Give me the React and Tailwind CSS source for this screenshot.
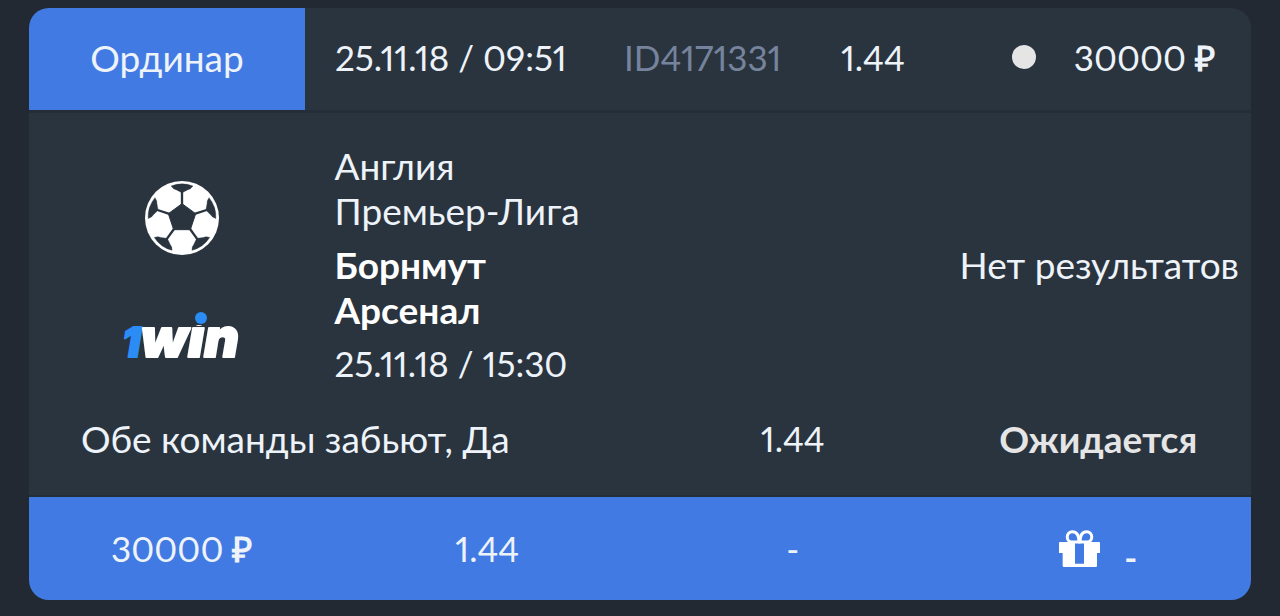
import React from "react";

const bet = {
    type: "Ординар",
    createdAt: "25.11.18 / 09:51",
    id: "ID4171331",
    odds: "1.44",
    amount: "30000",
    country: "Англия",
    league: "Премьер-Лига",
    home: "Борнмут",
    away: "Арсенал",
    startsAt: "25.11.18 / 15:30",
    result: "Нет результатов",
    outcome: "Обе команды забьют, Да",
    status: "Ожидается",
};

function Amount({ value }) {
    return (
        <span className="whitespace-nowrap">
            {value} <span className="font-bold">₽</span>
        </span>
    );
}

function BallIcon() {
    const angles = [0, 72, 144, 216, 288];

    return (
        <svg viewBox="-111 -111 222 222" className="w-[74px] h-[74px]" aria-hidden="true">
            <circle r="111" fill="#fff" />
            <g fill="#2a343f" stroke="#2a343f">
                <path d="M0 -43 L41 -13 L25 35 L-25 35 L-41 -13 Z" strokeWidth="3" strokeLinejoin="round" />
                {angles.map((a) => (
                    <g key={a} transform={`rotate(${a})`}>
                        <path d="M0 -40 V-80" strokeWidth="7" />
                        <path
                            d="M-33 -96 Q0 -109 33 -96 Q26 -86 18 -85 L3 -77 H-3 L-18 -85 Q-26 -86 -33 -96 Z"
                            strokeWidth="1"
                        />
                    </g>
                ))}
            </g>
        </svg>
    );
}

function Logo() {
    return (
        <svg viewBox="0 0 124 76" className="w-[124px] h-[76px]" role="img" aria-label="1win">
            <text
                x="2"
                y="60"
                fontFamily="Inter, sans-serif"
                fontWeight="900"
                fontStyle="italic"
                strokeWidth="2"
                strokeLinejoin="round"
            >
                <tspan fontSize="41" fill="#2a8cf4" stroke="#2a8cf4">1</tspan>
                <tspan fontSize="54" fill="#fff" stroke="#fff">win</tspan>
            </text>
            {/* round blue dot over the i */}
            <rect x="66" y="8" width="32" height="20" fill="#2a343f" />
            <circle cx="81" cy="21" r="6" fill="#2a8cf4" />
        </svg>
    );
}

function GiftIcon() {
    return (
        <svg viewBox="0 0 123 111" className="w-[41px] h-[37px]" aria-hidden="true">
            <g fill="none" stroke="#fff" strokeWidth="9">
                <path d="M60 36 H38 C19 34 21 5 40 5 C53 5 60 16 60 36 Z" />
                <path d="M63 36 H85 C104 34 102 5 83 5 C70 5 63 16 63 36 Z" />
            </g>
            <path
                fill="#fff"
                fillRule="evenodd"
                d="M3 36 H120 Q123 36 123 39 V69 H114 V107 Q114 111 110 111 H15 Q11 111 11 107 V69 H0 V39 Q0 36 3 36 Z M48 38 V101 H75 V38 Z"
            />
        </svg>
    );
}

export default function App() {
    return (
        <div className="min-h-screen bg-[#222932] px-[29px] py-2 font-[Lato,sans-serif] text-[37px] leading-[45px] text-[#edf3f9] proportional-nums">
            <article className="overflow-hidden rounded-[20px] bg-[#2a343f]">

                {/* Header */}
                <header className="grid grid-cols-[minmax(0,276fr)_minmax(0,289fr)_minmax(0,217fr)_minmax(0,171fr)_minmax(0,269fr)] items-center border-b-3 border-[#252d38] text-[35px] leading-[45px]">
                    <div className="flex h-[102px] items-center justify-center bg-[#427ae3] pb-1 text-[37px]">
                        {bet.type}
                    </div>
                    <time className="pb-1 pl-[30px] whitespace-nowrap">{bet.createdAt}</time>
                    <span className="pb-1 pl-[30px] text-[#76839c]">{bet.id}</span>
                    <span className="pb-1 pl-[30px]">{bet.odds}</span>
                    <div className="flex items-center justify-between pb-1 pl-[30px] pr-9">
                        <span className="size-6 rounded-full bg-[#e5e5e5]" />
                        <Amount value={bet.amount} />
                    </div>
                </header>

                {/* Match */}
                <section className="grid grid-cols-4 pt-[30px]">
                    <div className="flex flex-col items-center gap-[42px] pt-[38px]">
                        <BallIcon />
                        <Logo />
                    </div>
                    <div className="flex flex-col gap-[9px] whitespace-nowrap">
                        <div>
                            <p>{bet.country}</p>
                            <p>{bet.league}</p>
                        </div>
                        <div className="font-bold text-white">
                            <p>{bet.home}</p>
                            <p>{bet.away}</p>
                        </div>
                        <time className="text-[35px]">{bet.startsAt}</time>
                    </div>
                    <p className="col-span-2 self-center pr-3 text-right">{bet.result}</p>
                </section>

                {/* Outcome */}
                <section className="grid grid-cols-4 pt-[30px] pb-[34px] text-center">
                    <p className="col-span-2 pl-[52px] text-left">{bet.outcome}</p>
                    <p className="text-[35px]">{bet.odds}</p>
                    <p className="font-bold text-[#e5e5e5]">{bet.status}</p>
                </section>

                {/* Totals */}
                <footer className="grid h-[105px] grid-cols-4 items-center border-t-2 border-[#252d38] bg-[#427ae3] text-center text-[35px]">
                    <Amount value={bet.amount} />
                    <span>{bet.odds}</span>
                    <span>-</span>
                    <div className="flex items-end justify-center gap-6">
                        <GiftIcon />
                        <span className="h-8 font-bold">-</span>
                    </div>
                </footer>
            </article>
        </div>
    );
}
